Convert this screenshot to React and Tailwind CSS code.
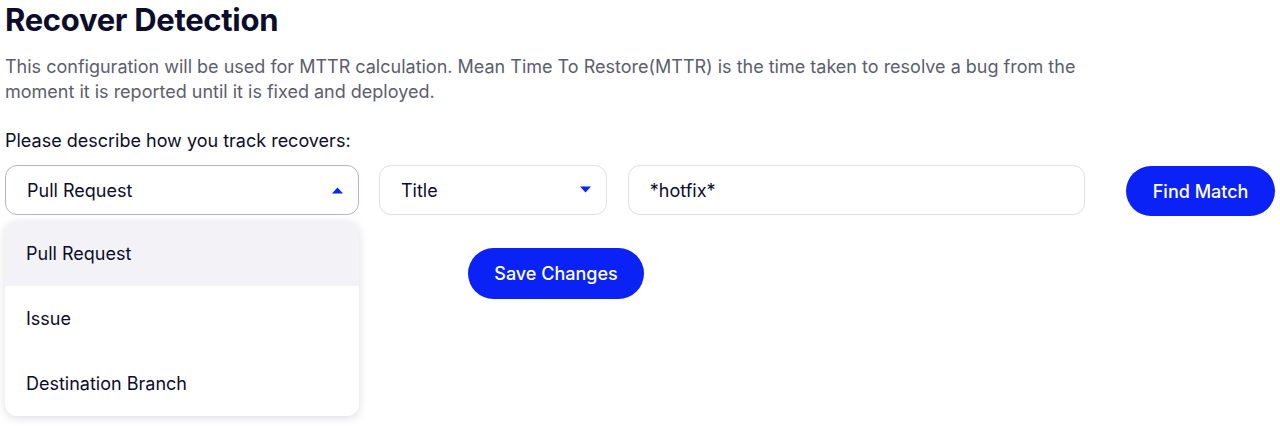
import { useState } from 'react';

const options = ['Pull Request', 'Issue', 'Destination Branch'];

function Caret({ up }) {
  return (
    <svg width="13" height="8" viewBox="0 0 13 8" className="text-[#0a24f5]">
      {up ? <path d="M1 7.5 L6.5 1.5 L12 7.5 Z" fill="currentColor" /> : <path d="M1 0.5 L6.5 6.5 L12 0.5 Z" fill="currentColor" />}
    </svg>
  );
}

export default function App() {
  const [source, setSource] = useState('Pull Request');
  const [open, setOpen] = useState(true);
  const [pattern, setPattern] = useState('*hotfix*');

  return (
    <div className="w-[1280px] h-[426px] bg-white px-[5px] pt-[1px] font-['Inter','Noto_Sans',sans-serif] text-[#0c0d2a]">
      <h1 className="text-[31px] leading-[38px] font-bold tracking-[-0.3px]">Recover Detection</h1>
      <p className="mt-[15px] w-[1090px] text-[18px] leading-[25px] text-[#5b5e6e]">
        This configuration will be used for MTTR calculation. Mean Time To Restore(MTTR) is the time taken to resolve a bug from the moment it is reported until it is fixed and deployed.
      </p>
      <p className="mt-[24px] text-[18px] leading-[25px]">Please describe how you track recovers:</p>

      <div className="mt-[12px] flex items-start">
        <div className="relative">
          <button
            onClick={() => setOpen(!open)}
            className="flex items-center justify-between w-[354px] h-[50px] pl-[21px] pr-[14px] rounded-[12px] border border-[#b3b5c6] bg-white text-[18px] text-left"
          >
            <span>{source}</span>
            <Caret up={open} />
          </button>
          {open && (
            <div className="absolute left-0 top-[56px] z-10 w-[354px] rounded-[12px] bg-white shadow-[0_2px_10px_rgba(20,24,60,0.14)] overflow-hidden">
              {options.map(o => (
                <div
                  key={o}
                  onClick={() => { setSource(o); setOpen(false); }}
                  className={`h-[65px] flex items-center px-[21px] text-[18px] ${o === source ? 'bg-[#f3f3f7]' : ''}`}
                >
                  {o}
                </div>
              ))}
            </div>
          )}
        </div>

        <button className="ml-[20px] flex items-center justify-between w-[228px] h-[50px] pl-[21px] pr-[14px] rounded-[12px] border border-[#dfe0e8] bg-white text-[18px]">
          <span>Title</span>
          <Caret />
        </button>

        <input
          value={pattern}
          onChange={e => setPattern(e.target.value)}
          className="ml-[21px] w-[458px] h-[50px] px-[21px] rounded-[12px] border border-[#dfe0e8] text-[18px] outline-none"
        />

        <button className="ml-[41px] mt-[1px] w-[149px] h-[50px] rounded-full bg-[#0a22f5] text-white text-[18px] font-medium">
          Find Match
        </button>
      </div>

      <button className="mt-[32px] ml-[463px] w-[176px] h-[51px] rounded-full bg-[#0a22f5] text-white text-[18px] font-medium">
        Save Changes
      </button>
    </div>
  );
}
